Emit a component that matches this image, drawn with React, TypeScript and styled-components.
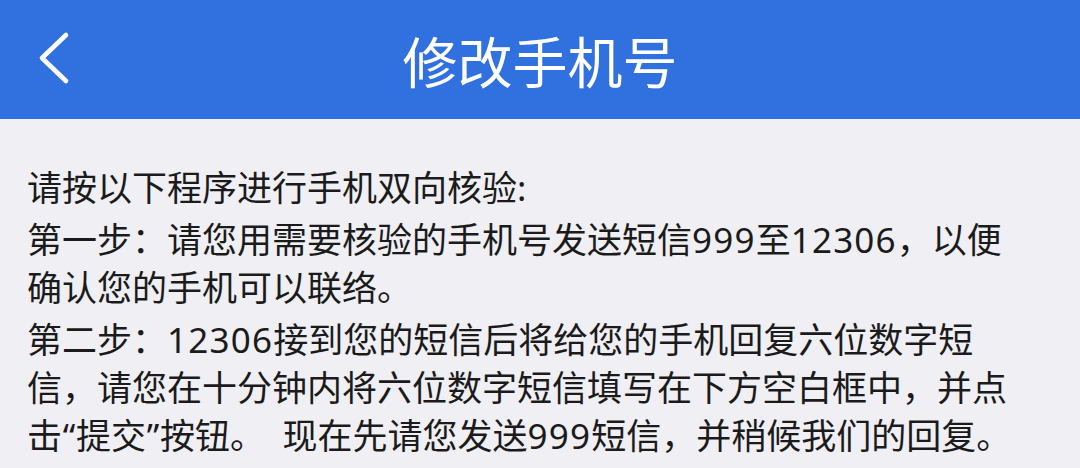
import styled, { createGlobalStyle } from "styled-components";

const GlobalStyle = createGlobalStyle`
  html, body {
    margin: 0;
    padding: 0;
    background-color: #efeff4;
  }

  body {
    font-family: "Noto Sans", "Noto Sans CJK SC", sans-serif;
  }
`;

const steps: string[][] = [
  ["请按以下程序进行手机双向核验:"],
  ["第一步：请您用需要核验的手机号发送短信999至12306，以便", "确认您的手机可以联络。"],
  [
    "第二步：12306接到您的短信后将给您的手机回复六位数字短",
    "信，请您在十分钟内将六位数字短信填写在下方空白框中，并点",
    "击“提交”按钮。　现在先请您发送999短信，并稍候我们的回复。",
  ],
];

// digits and quote marks come from the latin font, which runs a bit narrow
function renderLine(line: string) {
  return line.split(/(\d+|[“”])/).map((part, i) => {
    if (/^\d+$/.test(part)) return <Num key={i}>{part}</Num>;
    if (part === "“" || part === "”") return <Quote key={i}>{part}</Quote>;
    return part;
  });
}

export default function App() {
  return (
    <>
      <GlobalStyle />
      <Page>
        <NavBar>
          <BackButton aria-label="返回">
            <svg width="40" height="56" viewBox="0 0 40 56" fill="none">
              <path
                d="M30 5 L6 28 L30 51"
                stroke="#ffffff"
                strokeWidth="4.6"
                strokeLinecap="round"
                strokeLinejoin="round"
              />
            </svg>
          </BackButton>
          <Title>修改手机号</Title>
        </NavBar>
        <Content>
          {steps.map((lines, i) => (
            <Paragraph key={i}>
              {lines.map((line, j) => (
                <Line key={j}>{renderLine(line)}</Line>
              ))}
            </Paragraph>
          ))}
        </Content>
      </Page>
    </>
  );
}

const Page = styled.div`
  width: 1080px;
  min-height: 468px;
  background-color: #efeff4;
`;

const NavBar = styled.header`
  position: relative;
  height: 119px;
  background-color: #3070df;
  display: flex;
  align-items: center;
  justify-content: center;
`;

const BackButton = styled.button`
  position: absolute;
  left: 36px;
  top: 30px;
  padding: 0;
  border: none;
  background: transparent;
  display: flex;
  cursor: pointer;
`;

const Title = styled.h1`
  margin: 0 0 2px;
  color: #ffffff;
  font-family: "Noto Sans CJK SC", sans-serif;
  font-size: 55px;
  font-weight: 400;
  letter-spacing: 0;
`;

const Content = styled.main`
  padding: 45px 27px 0;
  color: #1b1b1b;
  font-size: 35px;
  line-height: 48px;
`;

const Paragraph = styled.p`
  margin: 0 0 4px;
`;

const Line = styled.span`
  display: block;
  white-space: nowrap;
`;

const Num = styled.span`
  letter-spacing: 1.2px;
`;

const Quote = styled.span`
  display: inline-block;
  width: 14px;
  text-align: center;
`;
